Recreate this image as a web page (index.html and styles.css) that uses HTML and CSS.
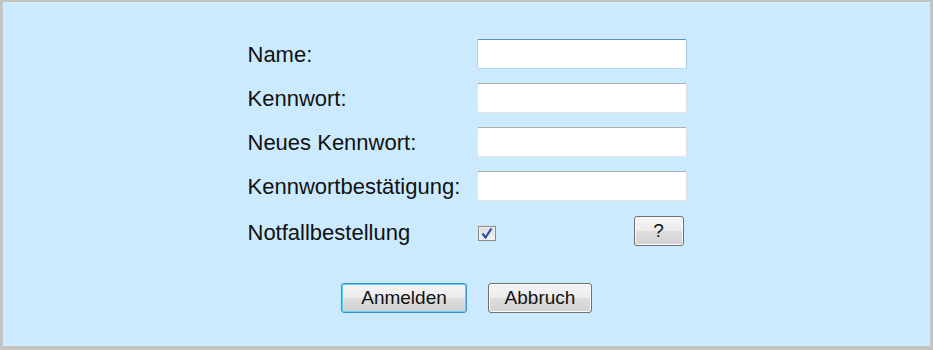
FILE: index.html
```html
<!DOCTYPE html>
<html lang="de">
<head>
    <meta charset="UTF-8">
    <title>Anmeldung</title>
    <link rel="stylesheet" href="styles.css">
</head>
<body>
    <div class="frame">
        <form class="login" onsubmit="return false;">
            <label class="label" for="name">Name:</label>
            <input class="field focused" id="name" type="text">

            <label class="label" for="pw">Kennwort:</label>
            <input class="field" id="pw" type="password">

            <label class="label" for="pw-new">Neues Kennwort:</label>
            <input class="field" id="pw-new" type="password">

            <label class="label" for="pw-confirm">Kennwortbestätigung:</label>
            <input class="field" id="pw-confirm" type="password">

            <span class="label last">Notfallbestellung</span>
            <div class="option-cell last">
                <span class="check">
                    <svg width="12" height="11" viewBox="0 0 12 11">
                        <path d="M1.5 5.5 L4.5 9.5 L10.5 0.5" fill="none" stroke="#2b4fae" stroke-width="2.2"/>
                    </svg>
                </span>
                <button class="btn help" type="button">?</button>
            </div>
        </form>

        <div class="actions">
            <button class="btn default" type="submit">Anmelden</button>
            <button class="btn" type="button">Abbruch</button>
        </div>
    </div>
</body>
</html>
```

FILE: styles.css
```css
html, body {
    margin: 0;
    padding: 0;
}

body {
    font-family: "Liberation Sans", Arial, sans-serif;
    color: #111;
}

.frame {
    width: 933px;
    height: 350px;
    box-sizing: border-box;
    background: #cbeafd;
    border: 3px solid #c3c3c3;
    border-top-width: 2px;
    border-bottom-width: 4px;
    box-shadow: inset 1px 1px 0 #d9eef9, inset -1px -1px 0 #d4ecf9;
    padding-top: 37px;
}

.login {
    display: grid;
    grid-template-columns: 229px 210px;
    grid-auto-rows: 30px;
    row-gap: 14px;
    width: 439px;
    margin: 0 auto;
    padding-left: 1px;
}

.label {
    display: flex;
    align-items: center;
    font-size: 22px;
    padding-top: 1px;
}

.last {
    margin-top: 2px;
}

.label.last {
    padding-top: 3px;
}

.field {
    box-sizing: border-box;
    width: 210px;
    height: 30px;
    margin: 0;
    background: #fff;
    border: 1px solid;
    border-color: #abadb3 #dbdfe6 #e3e9ef #e2e3ea;
    border-radius: 2px;
    outline: none;
}

.field.focused {
    border-color: #5b8fc0 #a4c9e3 #b7d9ed #b5cfe7;
}

.option-cell {
    display: flex;
    align-items: center;
    justify-content: space-between;
    padding-right: 3px;
}

.check {
    box-sizing: border-box;
    width: 18px;
    height: 15px;
    margin: 5px 0 0 1px;
    border: 1px solid #8a8a8a;
    background: linear-gradient(#dcdcdc, #f4f4f4);
    box-shadow: inset 0 0 0 1px #f0f0f0;
    display: flex;
    align-items: center;
    justify-content: center;
}

.btn {
    box-sizing: border-box;
    height: 30px;
    margin: 0;
    padding: 0;
    font-family: "Liberation Sans", Arial, sans-serif;
    font-size: 19px;
    color: #111;
    border: 1px solid #707070;
    border-radius: 3px;
    background: linear-gradient(#f4f4f4 0%, #ececec 48%, #dddddd 52%, #d2d2d2 100%);
    box-shadow: inset 0 0 0 1px #fafafa;
    cursor: pointer;
}

.help {
    width: 50px;
}

.actions {
    display: flex;
    justify-content: center;
    gap: 21px;
    margin-top: 38px;
}

.actions .btn {
    width: 104px;
}

.actions .btn.default {
    width: 126px;
    border-color: #3c8fc8;
    box-shadow: inset 0 0 0 1px #5fd2f8;
}
```
